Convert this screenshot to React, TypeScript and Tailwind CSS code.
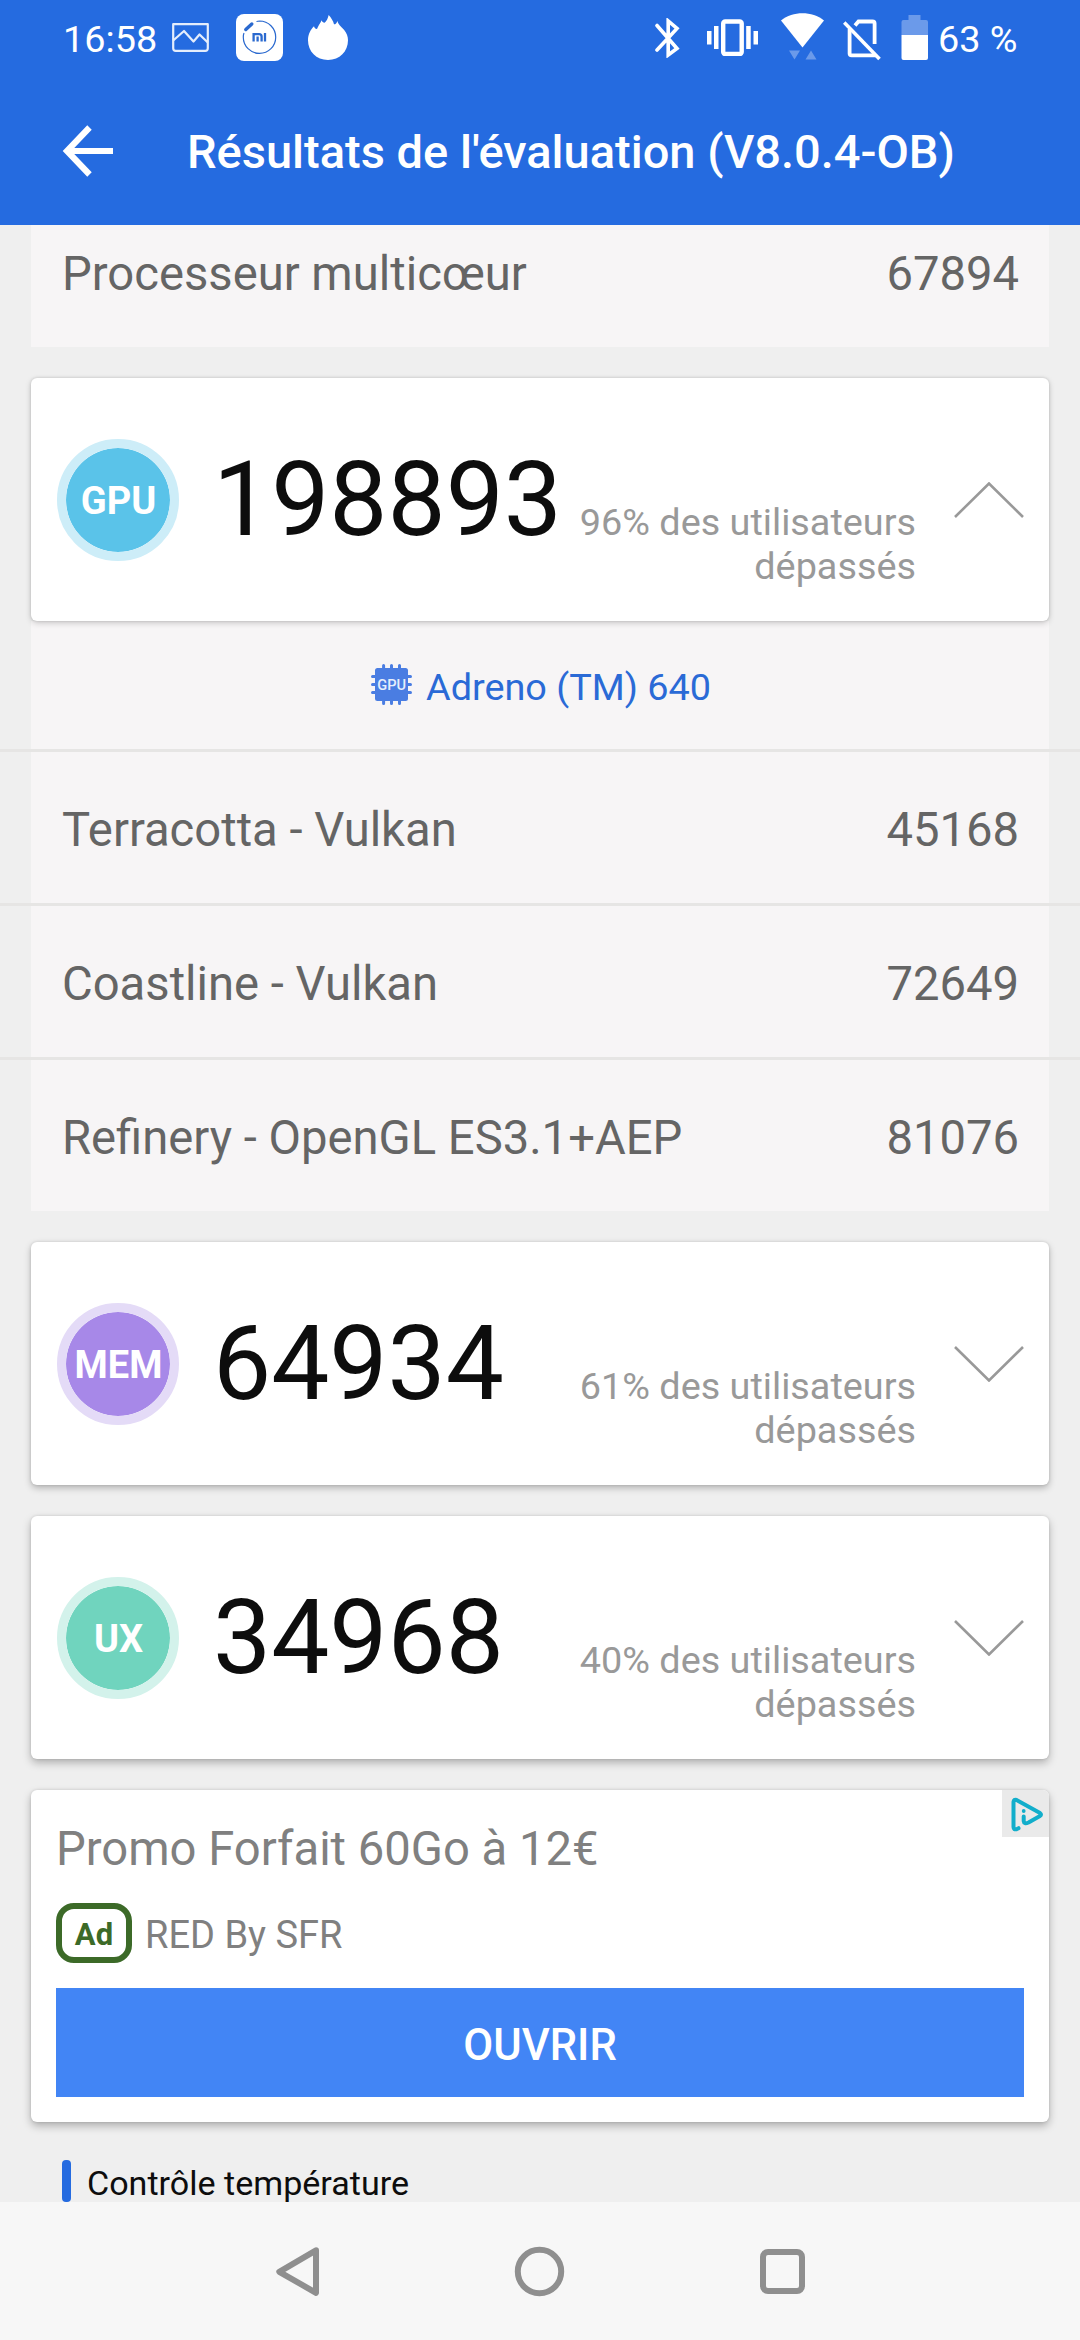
import React from "react";

function StatusBar() {
  return (
    <div className="flex h-[78px] items-start justify-between pl-[63px] pr-[62px] text-[37.800px] leading-[44px] text-white">
      <div className="flex items-start">
        <span className="w-[109px] pt-[17px] whitespace-nowrap">16:58</span>
        <svg className="mt-[23px] h-[29px] w-[37px]" viewBox="0 0 37 29" fill="none" stroke="#e4edfc" strokeWidth="2.200" strokeLinejoin="round">
          <path d="M1.2 1.2h34.6v24a2.6 2.6 0 0 1-2.600 2.600h-29.400a2.600 2.600 0 0 1-2.600-2.600z" />
          <path d="M1.200 17.500L12 8l9.500 10.500L27.500 11.500L35.800 19.500" />
        </svg>
        <svg className="mt-[14px] ml-[27px] h-[47px] w-[47px]" viewBox="0 0 47 47" fill="none" stroke="#2a69cf">
          <rect width="47" height="47" rx="8" fill="#fff" stroke="none" />
          <path d="M23.500 7a16.200 16.200 0 1 1-16.200 16.200c0-1.800.2-3 .7-4.200M20.500 7.500l3-.5" strokeWidth="1.200" />
          <path d="M9.800 15.500l6-5.500" strokeWidth="3.400" strokeLinecap="round" />
          <path d="M17.600 27.500v-7.300h5.400q2.600 0 2.600 2.600v4.700M21.600 22.500v5M29 19v8.500" strokeWidth="2.300" />
        </svg>
        <svg className="mt-[15px] ml-[25px] h-[45px] w-[40px]" viewBox="0 0 120 135" fill="#fff">
          <path d="M60 135C25 135 0 110 0 76C0 58 8 44 18 34C19 39 22 42 27 42C30 34 36 26 41 16C42 20 45 23 50 23C56 18 60 10 62 0C69 8 76 18 78 28C83 28 86 25 88 18C91 28 97 34 108 44C116 54 120 64 120 76C120 110 95 135 60 135Z" />
        </svg>
      </div>
      <div className="flex items-start">
        <svg className="mt-[18px] h-[40px] w-[25px]" viewBox="0 0 25 40" fill="none" stroke="#fff" strokeWidth="3.600" strokeLinejoin="miter" strokeLinecap="round">
          <path d="M2 7.500L22 30.500L13.200 37V3L22 10.500L2 32" />
        </svg>
        <svg className="mt-[19px] ml-[27px] h-[37px] w-[51px]" viewBox="0 0 51 37" fill="#fff">
          <rect x="0" y="12" width="4.500" height="13.500" />
          <rect x="7" y="7" width="4.500" height="23" />
          <rect x="39.200" y="7" width="4.500" height="23" />
          <rect x="46.500" y="12" width="4.500" height="13.500" />
          <rect x="16.200" y="2.500" width="18.500" height="32.500" rx="2" fill="none" stroke="#fff" strokeWidth="4.400" />
        </svg>
        <svg className="mt-[13px] ml-[23px] h-[47px] w-[43px]" viewBox="0 0 43 47" fill="#fff">
          <path d="M21.500 34.500L0 7.500C12-2.200 31-2.200 43 7.500Z" />
          <path d="M8 37.500h11l-5.500 9zM24.500 46.500h11l-5.500-9z" opacity=".32" />
        </svg>
        <svg className="mt-[19px] ml-[19px] h-[42px] w-[39px]" viewBox="0 0 39 42" fill="none" stroke="#fff" strokeWidth="3.800">
          <path d="M12 6.500L15.500 2.500H29.500Q31.600 2.500 31.600 4.500V25" />
          <path d="M6.600 10V34.500Q6.600 36.300 8.600 36.300H33" />
          <path d="M1.200 3.500L36.500 40" strokeWidth="3.600" />
        </svg>
        <svg className="mt-[15px] ml-[19px] h-[45px] w-[27px]" viewBox="0 0 27 45" fill="#fff">
          <path d="M7.500 0h12v5h5.500a2 2 0 0 1 2 2v13H.5V7a2 2 0 0 1 2-2h5z" opacity=".32" />
          <path d="M.5 20h26.500v23a2 2 0 0 1-2 2H2.500a2 2 0 0 1-2-2z" />
        </svg>
        <span className="ml-[10px] w-[80px] pt-[17px] whitespace-nowrap">63 %</span>
      </div>
    </div>
  );
}

function Row({ label, value }: { label: string; value: string }) {
  return (
    <div className="mx-[31px] flex h-[151px] shrink-0 items-center justify-between bg-[#f7f5f6] pr-[30px] pl-[31px] pt-[5px] text-[47.200px] leading-[56px] text-[#656565]">
      <span>{label}</span>
      <span>{value}</span>
    </div>
  );
}

const Divider = () => <div className="h-[3px] shrink-0 bg-[#e6e5e4]" />;

function ScoreCard(props: { tag: string; badge: string; shadow: string; score: string; percent: string; open?: boolean }) {
  return (
    <section className={`relative mx-[31px] flex h-[243px] shrink-0 rounded-[6px] bg-white pl-[26px] pr-[25px] ${props.shadow}`}>
      <div className={`flex h-[122px] w-[122px] shrink-0 items-center justify-center self-center rounded-full border-[9px] pt-[2px] pl-[1px] text-[38px] leading-[44px] font-bold text-white ${props.badge}`}>
        {props.tag}
      </div>
      <div className="ml-[34px] self-center text-[103.500px] leading-[122px] text-[#0d0d0d]">{props.score}</div>
      <div className="ml-auto w-[345px] pt-[122px] text-right text-[37.800px] leading-[44px] text-[#999]">
        {props.percent} des utilisateurs dépassés
      </div>
      <svg className="ml-[38px] h-[36px] w-[70px] shrink-0 self-center" viewBox="0 0 70 36" fill="none" stroke="#999" strokeWidth="2.600">
        <path d={props.open ? "M1 35L35 1.500L69 35" : "M1 1L35 34.500L69 1"} />
      </svg>
    </section>
  );
}

function ChipIcon() {
  return (
    <svg className="mb-[2px] h-[41px] w-[41px]" viewBox="0 0 41 41">
      <g stroke="#4a7de2" strokeWidth="3" strokeLinecap="round">
        <path d="M12.600 1.500v38M20.500 1.500v38M28.500 1.500v38M1.500 12.600h38M1.500 20.500h38M1.500 28.500h38" />
      </g>
      <rect x="4" y="4" width="33" height="33" rx="2.500" fill="#4a7de2" />
      <text x="20.600" y="26.300" textAnchor="middle" fontSize="14.600" fontWeight="500" fill="#e6eefc">GPU</text>
    </svg>
  );
}

function AdCard() {
  return (
    <section className="relative mx-[31px] mt-[31px] flex h-[332px] shrink-0 flex-col rounded-[6px] bg-white pl-[25px] pr-[25px] text-[#808080] shadow-[0_4px_8px_rgba(0,0,0,0.270),0_0_3px_rgba(0,0,0,0.120)]">
      <div className="absolute top-0 right-0 flex h-[47px] w-[47px] items-center justify-center rounded-tr-[6px] bg-[#eaeaea]">
        <svg className="h-[36px] w-[34px]" viewBox="0 0 34 36" fill="none" stroke="#12aecb" strokeWidth="4" strokeLinecap="round" strokeLinejoin="round">
          <path d="M9.500 32.200L7.500 33.200Q4.600 34 4.500 31V6Q4.800 3 7.500 4L31 17Q33 18.500 31 20L19.500 26.500Q15 28.500 14.700 25V20.500" />
          <circle cx="14.700" cy="15" r="1.900" fill="#12aecb" stroke="none" />
        </svg>
      </div>
      <div className="pt-[31px] text-[47.200px] leading-[56px]">Promo Forfait 60Go à 12€</div>
      <div className="mt-[26px] flex h-[60px] items-center">
        <span className="flex h-[60px] w-[76px] items-center justify-center rounded-[18px] border-[6px] border-[#3c6a28] pt-[3px] text-[31px] leading-[36px] font-bold text-[#3c6a28]">Ad</span>
        <span className="ml-[13px] pt-[4px] text-[38px] leading-[44px]">RED By SFR</span>
      </div>
      <button className="mt-[25px] h-[109px] bg-[#4285f5] pt-[7px] text-[43.500px] leading-[52px] font-medium text-white">OUVRIR</button>
    </section>
  );
}

export default function App() {
  return (
    <div className="flex h-[2340px] w-[1080px] flex-col overflow-hidden bg-[#efefef] font-['Roboto',sans-serif]">
      <header className="h-[225px] shrink-0 bg-[#256be0]">
        <StatusBar />
        <div className="flex h-[147px] items-center pl-[62px]">
          <svg className="mb-[2px] h-[52px] w-[52px]" viewBox="0 0 52 52" fill="none" stroke="#fff" strokeWidth="6.200">
            <path d="M27.500 2.500L5 26L27.500 49.500M4.500 26H51" />
          </svg>
          <h1 className="ml-[73px] text-[47px] leading-[56px] font-medium whitespace-nowrap text-white">Résultats de l'évaluation (V8.0.4-OB)</h1>
        </div>
      </header>

      <main className="flex h-[1977px] shrink-0 flex-col justify-start overflow-hidden">
        <div className="-mt-[29px] shrink-0">
          <Row label="Processeur multicœur" value="67894" />
        </div>
        <div className="h-[31px] shrink-0" />
        <ScoreCard open tag="GPU" badge="bg-[#5ac3e9] border-[#cdedf8] bg-clip-padding" shadow="shadow-[0_2px_6px_rgba(0,0,0,0.180),0_0_3px_rgba(0,0,0,0.150)]" score="198893" percent="96%" />
        <div className="mx-[31px] flex h-[128px] shrink-0 items-center justify-center gap-[14px] bg-[#f7f5f6] pl-[2px] text-[37.800px] leading-[44px] text-[#2a6ad6]">
          <ChipIcon />
          <span className="pt-[4px]">Adreno (TM) 640</span>
        </div>
        <Divider />
        <Row label="Terracotta - Vulkan" value="45168" />
        <Divider />
        <Row label="Coastline - Vulkan" value="72649" />
        <Divider />
        <Row label="Refinery - OpenGL ES3.1+AEP" value="81076" />
        <div className="h-[31px] shrink-0" />
        <ScoreCard tag="MEM" badge="bg-[#a788e8] border-[#e4dbf7] bg-clip-padding" shadow="shadow-[0_3px_7px_rgba(0,0,0,0.250),0_0_3px_rgba(0,0,0,0.120)]" score="64934" percent="61%" />
        <div className="h-[31px] shrink-0" />
        <ScoreCard tag="UX" badge="bg-[#70d4be] border-[#d3f2eb] bg-clip-padding" shadow="shadow-[0_4px_8px_rgba(0,0,0,0.260),0_0_3px_rgba(0,0,0,0.120)]" score="34968" percent="40%" />
        <AdCard />
        <div className="mt-[38px] ml-[62px] flex shrink-0 items-start">
          <span className="h-[42px] w-[9px] rounded-[4px] bg-[#256be0]" />
          <span className="ml-[16px] text-[34.100px] leading-[46px] text-[#0d0d0d]">Contrôle température</span>
        </div>
      </main>

      <nav className="flex h-[138px] shrink-0 items-center justify-center bg-[#f7f7f7]">
        <svg className="h-[52px] w-[530px]" viewBox="0 0 530 52" fill="none" stroke="#8f8f8f" strokeWidth="6" strokeLinejoin="round">
          <path d="M41 5.300L4.300 26.800L41 47.800Z" />
          <circle cx="264.500" cy="26.500" r="21.700" />
          <rect x="488" y="7" width="39" height="39" rx="5" />
        </svg>
      </nav>
    </div>
  );
}
